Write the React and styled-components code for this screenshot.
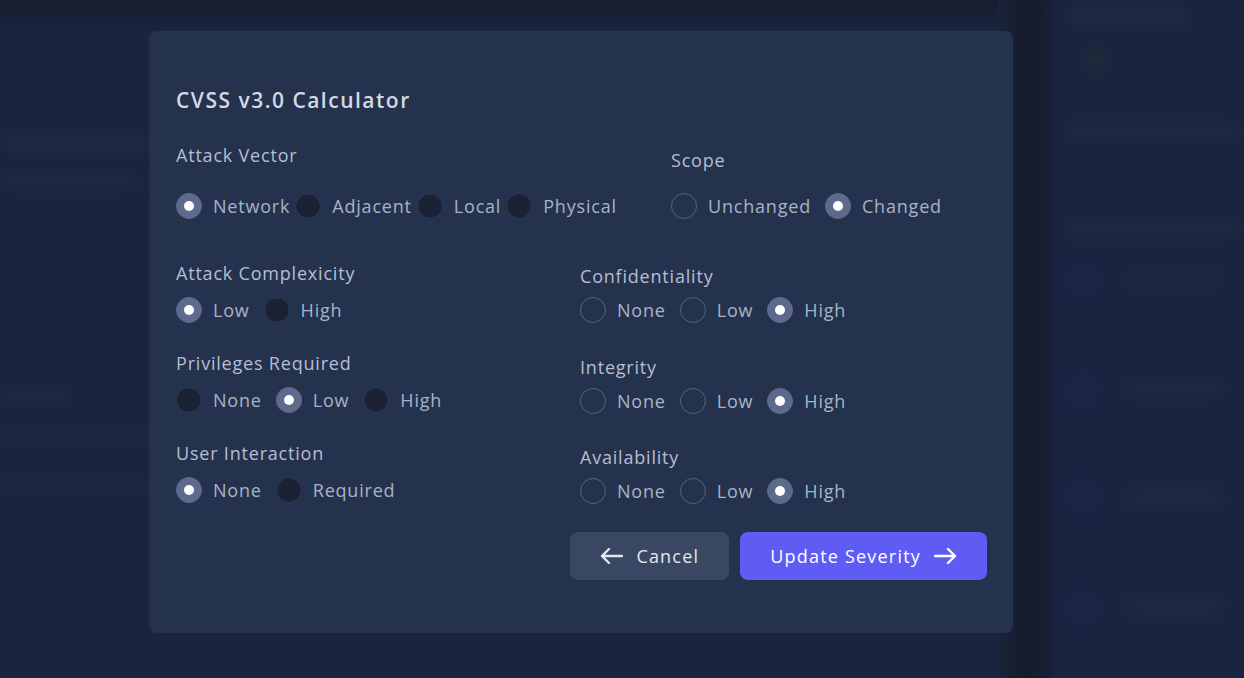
import React, { useState } from "react";
import styled, { createGlobalStyle } from "styled-components";

const GlobalStyle = createGlobalStyle`
  html, body {
    margin: 0;
    height: 100%;
    background: #1a2440;
    overflow: hidden;
  }
  body {
    font-family: "Open Sans", "Liberation Sans", sans-serif;
  }
`;

// ================= BACKDROP (blurred dashboard) =================
const Backdrop = styled.div`
  position: fixed;
  inset: 0;
  display: flex;
  background: #1a2440;
`;

const MainArea = styled.div`
  flex: 1;
  position: relative;
  background: linear-gradient(180deg, #161d2e 0px, #1a2440 30px);
`;

const Gutter = styled.div`
  width: 54px;
  background: linear-gradient(90deg, #1a2339, #161c2c 50%, #182036);
`;

const SidePanel = styled.div`
  width: 176px;
  display: flex;
  flex-direction: column;
  padding: 8px 0 0 16px;
  background: #1a2340;
  filter: blur(7px);
`;

const BlurBar = styled.div`
  height: ${({ $h }) => $h || 14}px;
  width: ${({ $w }) => $w}px;
  margin-top: ${({ $mt }) => $mt || 0}px;
  border-radius: 6px;
  background: ${({ $c }) => $c || "#263049"};
`;

const LeftBands = styled.div`
  display: flex;
  flex-direction: column;
  padding-top: 136px;
  filter: blur(7px);
`;

const SideRow = styled.div`
  display: flex;
  align-items: center;
  gap: 26px;
  margin-top: ${({ $mt }) => $mt}px;
`;

const Dot = styled.div`
  width: 30px;
  height: 30px;
  border-radius: 50%;
  background: ${({ $c }) => $c || "#1d2647"};
  margin-top: ${({ $mt }) => $mt || 0}px;
  margin-left: ${({ $ml }) => $ml || 0}px;
  flex-shrink: 0;
`;

// ================= MODAL =================
const Overlay = styled.div`
  position: fixed;
  inset: 0;
  padding: 31px 0 0 149px;
`;

const Modal = styled.div`
  width: 864px;
  height: 602px;
  box-sizing: border-box;
  padding: 55px 26px 0 27px;
  background: #25324d;
  border-radius: 8px;
  color: #b4bccd;
`;

const Title = styled.h2`
  margin: 0 0 29px;
  font-size: 21px;
  line-height: 28px;
  font-weight: 600;
  color: #d4d9e3;
  letter-spacing: 1.5px;
`;

const TopRow = styled.div`
  display: grid;
  grid-template-columns: 495px 1fr;
`;

const Group = styled.div`
  display: flex;
  flex-direction: column;
  height: ${({ $h }) => ($h ? `${$h}px` : "auto")};
`;

const Label = styled.div`
  font-size: 18px;
  line-height: 24px;
  letter-spacing: 0.8px;
  color: #b6bed0;
  margin-top: ${({ $mt }) => $mt || 0}px;
  margin-bottom: ${({ $mb }) => $mb}px;
`;

const Options = styled.div`
  display: flex;
  align-items: center;
  gap: ${({ $gap }) => $gap}px;
  height: 26px;
`;

const Option = styled.label`
  display: flex;
  align-items: center;
  gap: 11px;
  font-size: 18px;
  letter-spacing: 0.8px;
  color: #a9b2c6;
  cursor: pointer;
`;

const Radio = styled.span`
  width: 26px;
  height: 26px;
  box-sizing: border-box;
  border-radius: 50%;
  display: flex;
  align-items: center;
  justify-content: center;
  flex-shrink: 0;
  background: ${({ $checked, $outline }) =>
    $checked ? "#5d6a8c" : $outline ? "transparent" : "#1b2236"};
  border: 1px solid
    ${({ $checked, $outline }) =>
      $checked ? "#5d6a8c" : $outline ? "#56627f" : "#2e3a55"};

  &::after {
    content: "";
    width: 10px;
    height: 10px;
    border-radius: 50%;
    background: #ffffff;
    display: ${({ $checked }) => ($checked ? "block" : "none")};
  }
`;

const Grid = styled.div`
  display: grid;
  grid-template-columns: 404px 1fr;
  margin-top: 42px;
`;

const Column = styled.div`
  display: flex;
  flex-direction: column;
`;

const Footer = styled.div`
  display: flex;
  justify-content: flex-end;
  gap: 11px;
  margin-top: 28px;
`;

const Button = styled.button`
  height: 48px;
  display: flex;
  align-items: center;
  gap: 13px;
  padding: 0 30px;
  border: none;
  border-radius: 8px;
  font-family: inherit;
  font-size: 18px;
  font-weight: 500;
  letter-spacing: 1.2px;
  cursor: pointer;
  background: ${({ $primary }) => ($primary ? "#5f5cf5" : "#3a4762")};
  color: ${({ $primary }) => ($primary ? "#ffffff" : "#e3e7ef")};
`;

const Arrow = ({ left }) => (
  <svg width="23" height="16" viewBox="0 0 23 16" fill="none">
    <path
      d={left ? "M22 8H2M9 1L2 8l7 7" : "M1 8h20M14 1l7 7-7 7"}
      stroke="currentColor"
      strokeWidth="2.4"
      strokeLinecap="round"
      strokeLinejoin="round"
    />
  </svg>
);

function RadioGroup({ label, options, value, onChange, outline, gap = 14, labelMt, labelMb, height }) {
  return (
    <Group $h={height}>
      <Label $mt={labelMt} $mb={labelMb}>{label}</Label>
      <Options $gap={gap}>
        {options.map((o) => (
          <Option key={o} onClick={() => onChange(o)}>
            <Radio $checked={value === o} $outline={outline} />
            {o}
          </Option>
        ))}
      </Options>
    </Group>
  );
}

export default function App() {
  const [m, setM] = useState({
    av: "Network",
    scope: "Changed",
    ac: "Low",
    pr: "Low",
    ui: "None",
    c: "High",
    i: "High",
    a: "High",
  });
  const set = (k) => (v) => setM((p) => ({ ...p, [k]: v }));

  return (
    <>
      <GlobalStyle />
      <Backdrop>
        <MainArea>
          <LeftBands>
            <BlurBar $w={150} $h={14} $c="#222b43" />
            <BlurBar $w={140} $h={12} $mt={26} $c="#222b43" />
            <BlurBar $w={70} $h={12} $mt={202} $c="#222b43" />
            <BlurBar $w={150} $h={12} $mt={28} $c="#212a42" />
            <BlurBar $w={150} $h={12} $mt={38} $c="#212a42" />
          </LeftBands>
        </MainArea>
        <Gutter />
        <SidePanel>
          <BlurBar $w={120} $h={14} $c="#232c44" />
          <Dot $c="#1c2b3a" $mt={22} $ml={12} />
          <BlurBar $w={170} $h={14} $mt={50} $c="#222b43" />
          <BlurBar $w={170} $h={14} $mt={84} $c="#222b43" />
          <SideRow $mt={28}>
            <Dot />
            <BlurBar $w={100} $h={12} $c="#212a42" />
          </SideRow>
          <SideRow $mt={80}>
            <Dot />
            <BlurBar $w={100} $h={12} $c="#222b43" />
          </SideRow>
          <SideRow $mt={78}>
            <Dot />
            <BlurBar $w={100} $h={12} $c="#222b43" />
          </SideRow>
          <SideRow $mt={80}>
            <Dot />
            <BlurBar $w={100} $h={12} $c="#222b43" />
          </SideRow>
        </SidePanel>
      </Backdrop>

      <Overlay>
        <Modal>
          <Title>CVSS v3.0 Calculator</Title>

          <TopRow>
            <RadioGroup
              label="Attack Vector"
              options={["Network", "Adjacent", "Local", "Physical"]}
              value={m.av}
              onChange={set("av")}
              gap={5}
              labelMb={26}
            />
            <RadioGroup
              label="Scope"
              options={["Unchanged", "Changed"]}
              value={m.scope}
              onChange={set("scope")}
              outline
              labelMt={5}
              labelMb={21}
            />
          </TopRow>

          <Grid>
            <Column>
              <RadioGroup label="Attack Complexicity" options={["Low", "High"]} value={m.ac} onChange={set("ac")} labelMb={12} height={90} />
              <RadioGroup label="Privileges Required" options={["None", "Low", "High"]} value={m.pr} onChange={set("pr")} labelMb={12} height={90} />
              <RadioGroup label="User Interaction" options={["None", "Required"]} value={m.ui} onChange={set("ui")} labelMb={12} />
            </Column>
            <Column>
              <RadioGroup label="Confidentiality" options={["None", "Low", "High"]} value={m.c} onChange={set("c")} outline labelMt={3} labelMb={9} height={91} />
              <RadioGroup label="Integrity" options={["None", "Low", "High"]} value={m.i} onChange={set("i")} outline labelMt={3} labelMb={9} height={90} />
              <RadioGroup label="Availability" options={["None", "Low", "High"]} value={m.a} onChange={set("a")} outline labelMt={3} labelMb={9} />
            </Column>
          </Grid>

          <Footer>
            <Button>
              <Arrow left />
              Cancel
            </Button>
            <Button $primary>
              Update Severity
              <Arrow />
            </Button>
          </Footer>
        </Modal>
      </Overlay>
    </>
  );
}
